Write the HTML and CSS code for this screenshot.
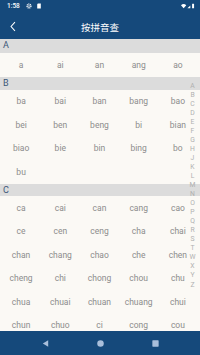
FILE: index.html
```html
<!DOCTYPE html>
<html>
<head>
<meta charset="utf-8">
<link rel="stylesheet" href="styles.css">
</head>
<body>
<div class="app">
  <div class="status">
    <span class="time">1:58</span>
    <svg class="sicon" viewBox="0 0 10 10"><circle cx="5" cy="5" r="3.2" fill="none" stroke="#fff" stroke-width="2.2" stroke-dasharray="1.6 0.9"/><circle cx="5" cy="5" r="1.2" fill="#fff"/></svg>
    <svg class="sicon" viewBox="0 0 10 10"><path d="M3 1h5v8H2V2.5z" fill="#fff"/></svg>
    <span class="spacer"></span>
    <svg class="ricon" viewBox="0 0 24 10"><path d="M0 3.5Q4.5 -0.5 9 3.5L4.5 9z" fill="#fff"/><path d="M11 9L16 4V9z" fill="#fff"/><rect x="19" y="1" width="3.4" height="8" rx="0.6" fill="#fff"/></svg>
  </div>
  <div class="toolbar">
    <svg class="back" viewBox="0 0 10 14"><path d="M7.5 1.5L2.5 7l5 5.5" fill="none" stroke="#fff" stroke-width="1.3"/></svg>
    <div class="title">按拼音查</div>
  </div>
  <div class="content">
    <div class="sec">A</div>
    <div class="grid">
      <span>a</span><span>ai</span><span>an</span><span>ang</span><span>ao</span>
    </div>
    <div class="sec">B</div>
    <div class="grid">
      <span>ba</span><span>bai</span><span>ban</span><span>bang</span><span>bao</span>
      <span>bei</span><span>ben</span><span>beng</span><span>bi</span><span>bian</span>
      <span>biao</span><span>bie</span><span>bin</span><span>bing</span><span>bo</span>
      <span>bu</span>
    </div>
    <div class="sec">C</div>
    <div class="grid">
      <span>ca</span><span>cai</span><span>can</span><span>cang</span><span>cao</span>
      <span>ce</span><span>cen</span><span>ceng</span><span>cha</span><span>chai</span>
      <span>chan</span><span>chang</span><span>chao</span><span>che</span><span>chen</span>
      <span>cheng</span><span>chi</span><span>chong</span><span>chou</span><span>chu</span>
      <span>chua</span><span>chuai</span><span>chuan</span><span>chuang</span><span>chui</span>
      <span>chun</span><span>chuo</span><span>ci</span><span>cong</span><span>cou</span>
    </div>
    <div class="index">
      <span>A</span><span>B</span><span>C</span><span>D</span><span>E</span><span>F</span><span>G</span><span>H</span><span>J</span><span>K</span><span>L</span><span>M</span><span>N</span><span>O</span><span>P</span><span>Q</span><span>R</span><span>S</span><span>T</span><span>W</span><span>X</span><span>Y</span><span>Z</span>
    </div>
  </div>
  <div class="nav">
    <svg class="nicon" viewBox="0 0 10 10"><path d="M8 1.5V8.5L2 5z" fill="#a9bfdb"/></svg>
    <svg class="nicon" viewBox="0 0 10 10"><circle cx="5" cy="5" r="3.6" fill="#a9bfdb"/></svg>
    <svg class="nicon" viewBox="0 0 10 10"><rect x="1.5" y="1.5" width="7" height="7" rx="0.6" fill="#a9bfdb"/></svg>
  </div>
</div>
</body>
</html>
```

FILE: styles.css
```css
html, body {
  margin: 0;
  padding: 0;
}
body {
  width: 200px;
  height: 355px;
  overflow: hidden;
  font-family: Roboto, "Noto Sans CJK SC", sans-serif;
  background: #fbf9f5;
}
.app {
  display: flex;
  flex-direction: column;
  height: 355px;
}
.status {
  height: 12px;
  background: #15497b;
  display: flex;
  align-items: center;
  padding: 0 5px 0 7px;
  gap: 4px;
}
.time {
  color: #fff;
  font-size: 6.5px;
  font-weight: 500;
  margin-right: 2px;
}
.sicon {
  width: 6px;
  height: 6px;
}
.spacer {
  flex: 1;
}
.ricon {
  width: 14px;
  height: 6px;
}
.toolbar {
  height: 27px;
  background: #15497b;
  display: flex;
  align-items: center;
  position: relative;
}
.back {
  width: 8px;
  height: 11px;
  margin-left: 9px;
  margin-top: 2px;
}
.title {
  position: absolute;
  left: 0;
  right: 0;
  top: 9px;
  text-align: center;
  color: #fff;
  font-size: 9.5px;
  line-height: 12px;
  font-family: "Noto Sans CJK SC", sans-serif;
}
.content {
  flex: 1;
  overflow: hidden;
  position: relative;
}
.sec {
  height: 12.5px;
  line-height: 12.5px;
  background: #dcdcdc;
  color: #3b5677;
  font-size: 9px;
  padding-left: 3px;
}
.sec:first-child {
  height: 13.5px;
  line-height: 13.5px;
}
.grid {
  display: grid;
  grid-template-columns: repeat(5, 1fr);
  width: 196px;
  margin-left: 1.5px;
  grid-auto-rows: 23.5px;
}
.grid span {
  display: flex;
  align-items: center;
  justify-content: center;
  color: #8d8d8d;
  font-size: 8.5px;
}
.sec:first-child + .grid {
  grid-auto-rows: 24.5px;
}
.index {
  position: absolute;
  right: 3px;
  top: 42.5px;
  display: flex;
  flex-direction: column;
  align-items: center;
  width: 9px;
}
.index span {
  height: 9.05px;
  line-height: 9.05px;
  font-size: 6.8px;
  color: #b0b0b0;
}
.nav {
  height: 24px;
  background: #15497b;
  display: flex;
  align-items: center;
  justify-content: center;
  gap: 46px;
}
.nicon {
  width: 9px;
  height: 9px;
}
```
